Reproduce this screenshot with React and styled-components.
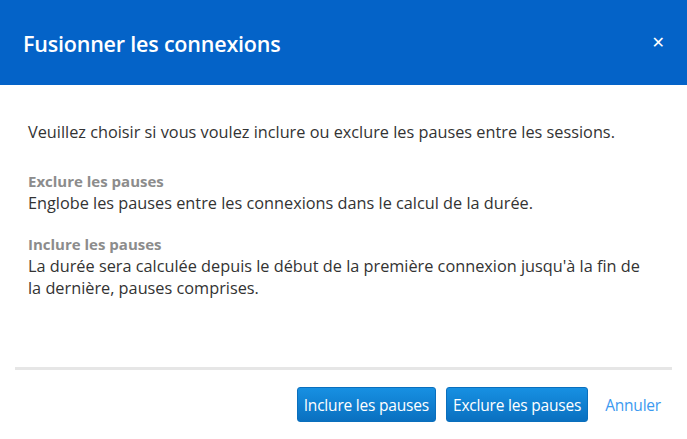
import React from 'react';
import styled, {createGlobalStyle} from 'styled-components';

const GlobalStyle = createGlobalStyle`
  body {
    margin: 0;
    background: #ffffff;
    font-family: 'Open Sans', 'Noto Sans', sans-serif;
  }
`;

const StyledModal = styled.div`
  width: 687px;
  height: 439px;
  display: flex;
  flex-direction: column;
  background: #ffffff;
`;

const StyledHeader = styled.div`
  height: 85px;
  background-color: #0463c8;
  color: #ffffff;
  display: flex;
  align-items: center;
  justify-content: space-between;
  padding: 2px 22px 0 23px;
  box-sizing: border-box;
`;

const StyledTitle = styled.h1`
  margin: 0;
  font-size: 21.5px;
  font-weight: 600;
  letter-spacing: -0.2px;
`;

const StyledClose = styled.button`
  border: none;
  background: none;
  color: #ffffff;
  font-family: 'DejaVu Sans', sans-serif;
  font-size: 16px;
  font-weight: 700;
  padding: 0;
  margin-bottom: 2px;
  cursor: pointer;
`;

const StyledBody = styled.div`
  flex: 1;
  padding: 36px 40px 0 28px;
  color: #333333;
  font-size: 16.3px;
  line-height: 22px;
`;

const StyledIntro = styled.p`
  margin: 0 -20px 27px 0;
`;

const StyledOption = styled.div`
  margin-bottom: 19px;
`;

const StyledOptionTitle = styled.div`
  font-weight: 700;
  font-size: 15px;
  color: #8c8c8c;
  line-height: 22px;
`;

const StyledDivider = styled.hr`
  margin: 0 15px;
  border: none;
  height: 3px;
  background: #e6e6e6;
`;

const StyledFooter = styled.div`
  display: flex;
  justify-content: flex-end;
  align-items: center;
  gap: 10px;
  padding: 17px 21px 17px 0;
`;

const StyledButton = styled.button`
  font-family: inherit;
  font-size: 15.5px;
  letter-spacing: -0.2px;
  height: 35px;
  padding: ${({primary}) => (primary ? '0 6px' : '0 5px')};
  border-radius: 3px;
  cursor: pointer;
  border: ${({primary}) => (primary ? '1px solid #0a6fbd' : 'none')};
  background: ${({primary}) => (primary ? 'linear-gradient(#1790e2, #0a70c0)' : 'none')};
  color: ${({primary}) => (primary ? '#ffffff' : '#3c9af0')};
  margin-left: ${({primary}) => (primary ? '0' : '2px')};
`;

const App = () => (
  <>
    <GlobalStyle />
    <StyledModal>
      <StyledHeader>
        <StyledTitle>Fusionner les connexions</StyledTitle>
        <StyledClose>✕</StyledClose>
      </StyledHeader>
      <StyledBody>
        <StyledIntro>
          Veuillez choisir si vous voulez inclure ou exclure les pauses entre les sessions.
        </StyledIntro>
        <StyledOption>
          <StyledOptionTitle>Exclure les pauses</StyledOptionTitle>
          Englobe les pauses entre les connexions dans le calcul de la durée.
        </StyledOption>
        <StyledOption>
          <StyledOptionTitle>Inclure les pauses</StyledOptionTitle>
          La durée sera calculée depuis le début de la première connexion jusqu'à la fin de
          la dernière, pauses comprises.
        </StyledOption>
      </StyledBody>
      <StyledDivider />
      <StyledFooter>
        <StyledButton primary>Inclure les pauses</StyledButton>
        <StyledButton primary>Exclure les pauses</StyledButton>
        <StyledButton>Annuler</StyledButton>
      </StyledFooter>
    </StyledModal>
  </>
);

export default App;
